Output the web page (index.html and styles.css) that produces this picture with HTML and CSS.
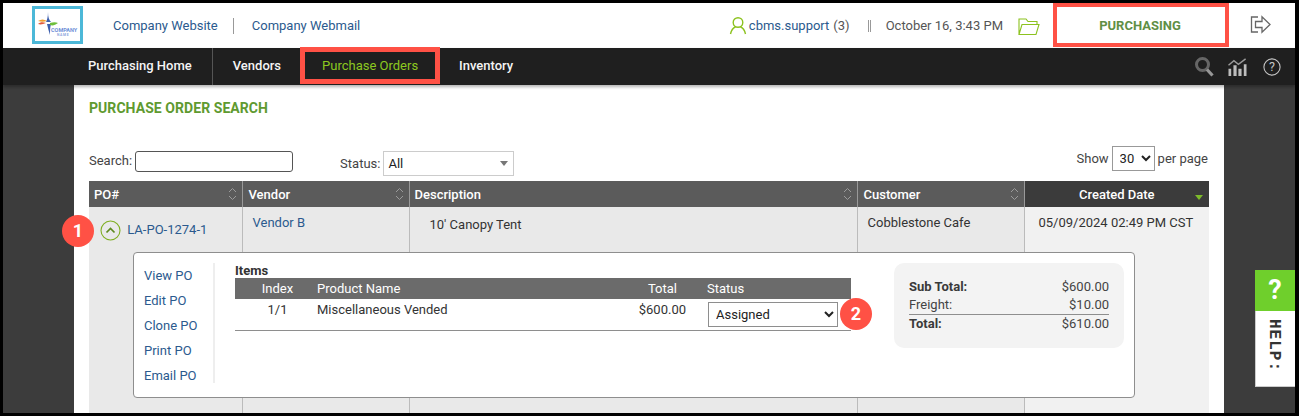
FILE: index.html
```html
<!DOCTYPE html>
<html lang="en">
<head>
<meta charset="utf-8">
<title>Purchase Order Search</title>
<link rel="stylesheet" href="styles.css">
</head>
<body>
<div class="frame">
  <header class="topbar">
    <div class="logo">
      <svg width="45" height="32" viewBox="0 0 45 32">
        <path d="M13 3 C13 8 12 11 11 13 L16 13 C14 11 13 8 13 3Z" fill="#3d5fae"/>
        <path d="M12 15 C13 19 14 23 15 26 C15 22 15 18 16 15Z" fill="#3d5fae"/>
        <path d="M3 12 C6 10 9 10 12 12 C9 13 6 13 3 12Z" fill="#f0a030"/>
        <path d="M3 15 C5 13 8 13 11 14 C8 15 6 16 3 15Z" fill="#e25a3a"/>
        <path d="M15 14 C18 13 21 13 23 14 C20 16 18 17 15 16Z" fill="#6fbf3c"/>
        <text x="16" y="23" class="logo-main">COMPANY</text>
        <text x="22" y="26.6" class="logo-sub">NAME</text>
      </svg>
    </div>
    <a class="toplink" href="#">Company Website</a>
    <span class="topdivider"></span>
    <a class="toplink" href="#">Company Webmail</a>
    <div class="topright">
      <svg class="usericon" width="18" height="19" viewBox="0 0 18 19" fill="none" stroke="#8cc21f" stroke-width="1.4">
        <circle cx="9" cy="6.5" r="4.8"/>
        <path d="M1.5 18 C2.5 13.5 5 11.5 6.5 11 M16.5 18 C15.5 13.5 13 11.5 11.5 11"/>
      </svg>
      <a class="toplink" href="#">cbms.support</a>
      <span class="count">(3)</span>
      <span class="doublebar"></span>
      <span class="when">October 16, 3:43 PM</span>
      <svg class="foldericon" width="22" height="19" viewBox="0 0 22 19" fill="none" stroke="#8cc21f" stroke-width="1.1">
        <path d="M1 17.5 V2 H8 L10 4.5 H19 V7.5 M1 17.5 L4 7.5 H21 L18 17.5 Z"/>
      </svg>
      <div class="module"><span>PURCHASING</span></div>
      <svg class="logout" width="21" height="19" viewBox="0 0 21 19" fill="none" stroke="#666" stroke-width="1.3">
        <path d="M8 2 H1.5 V17 H8"/>
        <path d="M5.5 6.5 H12 V1.8 L20 9.5 L12 17.2 V12.5 H5.5 Z"/>
      </svg>
    </div>
  </header>

  <nav class="navbar">
    <a class="navitem first" href="#">Purchasing Home</a>
    <a class="navitem" href="#">Vendors</a>
    <a class="navitem current" href="#">Purchase Orders</a>
    <a class="navitem" href="#">Inventory</a>
    <div class="navicons">
      <svg width="19" height="20" viewBox="0 0 19 20" fill="none">
        <circle cx="7.5" cy="7.5" r="6" stroke="#666" stroke-width="3"/>
        <path d="M12 12.5 L17.5 18.5" stroke="#979797" stroke-width="3.2"/>
      </svg>
      <svg class="charticon" width="21" height="18" viewBox="0 0 22 20">
        <path d="M1 8 L7 3 L12 7 L20 1" fill="none" stroke="#9a9a9a" stroke-width="1.6"/>
        <path d="M1 12 H4 V20 H1Z M6.5 8 H10 V20 H6.5Z M12 12 H15.5 V20 H12Z M18 7 H21 V20 H18Z" fill="#bdbdbd"/>
      </svg>
      <svg width="18" height="18" viewBox="0 0 20 20" fill="none" stroke="#c4c4c4" stroke-width="1.2">
        <circle cx="10" cy="10" r="9"/>
        <text x="10" y="14.5" class="helpq">?</text>
      </svg>
    </div>
  </nav>

  <main class="stage">
    <section class="panel">
      <h1 class="pagetitle">PURCHASE ORDER SEARCH</h1>
      <div class="filters">
        <label class="flabel">Search:</label>
        <input class="searchbox" type="text">
        <label class="flabel statuslabel">Status:</label>
        <div class="statusbox"><span>All</span><i class="caret"></i></div>
        <div class="perpage">
          <span>Show</span>
          <select class="pageselect"><option>30</option></select>
          <span>per page</span>
        </div>
      </div>
      <div class="tablewrap">
        <table class="results">
          <colgroup>
            <col class="c1"><col class="c2"><col class="c3"><col class="c4"><col class="c5">
          </colgroup>
          <thead>
            <tr>
              <th>PO#<svg class="sorter" width="9" height="14" viewBox="0 0 9 14"><path d="M1 5 L4.5 1.5 L8 5 M1 9 L4.5 12.5 L8 9" fill="none" stroke="#9b9b9b"/></svg></th>
              <th class="wide">Vendor<svg class="sorter" width="9" height="14" viewBox="0 0 9 14"><path d="M1 5 L4.5 1.5 L8 5 M1 9 L4.5 12.5 L8 9" fill="none" stroke="#9b9b9b"/></svg></th>
              <th>Description<svg class="sorter" width="9" height="14" viewBox="0 0 9 14"><path d="M1 5 L4.5 1.5 L8 5 M1 9 L4.5 12.5 L8 9" fill="none" stroke="#9b9b9b"/></svg></th>
              <th class="wide">Customer<svg class="sorter" width="9" height="14" viewBox="0 0 9 14"><path d="M1 5 L4.5 1.5 L8 5 M1 9 L4.5 12.5 L8 9" fill="none" stroke="#9b9b9b"/></svg></th>
              <th class="sorted">Created Date<i class="sortmark"></i></th>
            </tr>
          </thead>
          <tbody>
            <tr>
              <td class="pocell">
                <span class="toggle"><svg width="21" height="21" viewBox="0 0 21 21" fill="none"><circle cx="10.5" cy="10.5" r="9.5" stroke="#7fae22" stroke-width="1.1"/><path d="M6.5 12.5 L10.5 8.5 L14.5 12.5" stroke="#5d8a1e" stroke-width="1.7"/></svg></span>
                <a href="#">LA-PO-1274-1</a>
              </td>
              <td class="vendorcell"><a href="#">Vendor B</a></td>
              <td class="desccell">10' Canopy Tent</td>
              <td class="custcell">Cobblestone Cafe</td>
              <td class="datecell">05/09/2024 02:49 PM CST</td>
            </tr>
          </tbody>
        </table>
        <div class="detail">
          <ul class="actions">
            <li><a href="#">View PO</a></li>
            <li><a href="#">Edit PO</a></li>
            <li><a href="#">Clone PO</a></li>
            <li><a href="#">Print PO</a></li>
            <li><a href="#">Email PO</a></li>
          </ul>
          <div class="items">
            <div class="itemstitle">Items</div>
            <div class="itemhead itemgrid">
              <span class="ci">Index</span><span>Product Name</span><span class="ct">Total</span><span class="cs">Status</span>
            </div>
            <div class="itemrow itemgrid">
              <span class="ci num">1/1</span><span>Miscellaneous Vended</span><span class="ct amount">$600.00</span>
              <span class="cs"><select class="statusselect"><option>Assigned</option></select></span>
            </div>
          </div>
          <div class="totals">
            <div class="tline strong"><span>Sub Total:</span><span>$600.00</span></div>
            <div class="tline ruled"><span>Freight:</span><span>$10.00</span></div>
            <div class="tline strong"><span>Total:</span><span>$610.00</span></div>
          </div>
        </div>
        <span class="marker m1">1</span>
        <span class="marker m2">2</span>
      </div>
    </section>
    <aside class="helptab">
      <div class="helpq-box">?</div>
      <div class="helpword">HELP:</div>
    </aside>
  </main>
</div>
</body>
</html>
```
FILE: styles.css
```css
* { box-sizing: border-box; }
html, body { margin: 0; padding: 0; height: 416px; overflow: hidden; background: #000; }
body { font-family: Roboto, "Liberation Sans", sans-serif; font-size: 13px; color: #333; }
a { color: #2b5a8e; text-decoration: none; }

.frame { height: 416px; padding: 3px 4px 3px 3px; display: flex; flex-direction: column; }

.topbar { height: 45px; background: #fff; display: flex; align-items: center; flex: none; }
.logo { width: 51px; height: 38px; margin-left: 29px; margin-right: 30px; border: 3px solid #4cb8d8; background: #fff; margin-top: -1px; flex: none; }
.logo svg { display: block; }
.logo-main { font: bold 5.5px Roboto, sans-serif; fill: #6f8fd8; }
.logo-sub { font: bold 3.4px Roboto, sans-serif; fill: #8aa4dc; letter-spacing: .7px; }
.toplink { font-size: 13px; line-height: 16px; white-space: nowrap; }
.topdivider { width: 1px; height: 16px; background: #999; margin: 0 18px 0 15px; }
.topright { margin-left: auto; display: flex; align-items: center; height: 45px; }
.usericon { margin-right: 2px; }
.count { margin-left: 4px; color: #555; }
.doublebar { width: 3px; height: 12px; border-left: 1px solid #999; border-right: 1px solid #999; margin: 0 15px 0 18px; }
.when { color: #555; white-space: nowrap; }
.foldericon { margin-left: 15px; margin-top: 2px; }
.module { width: 176px; height: 44px; margin-left: 13px; border: 4px solid #ff5145; padding-right: 2px; display: flex; align-items: center; justify-content: center; font-weight: 700; font-size: 13px; color: #5f8f45; align-self: flex-start; }
.logout { margin-left: 21px; margin-right: 24px; margin-top: -2px; }

.navbar { height: 37px; background: #1f1f1f; display: flex; align-items: center; flex: none; padding-left: 85px; box-shadow: 0 2px 3px rgba(0,0,0,.3); position: relative; z-index: 2; }
.navitem { color: #f4f4f4; font-size: 13px; font-weight: 500; white-space: nowrap; height: 37px; line-height: 36px; }
.navitem.first { padding-right: 20px; border-right: 1px solid #555; margin-right: 20px; }
.navitem.current { color: #8cc820; border: 5px solid #ff5145; width: 140px; height: 37px; line-height: 27px; text-align: center; margin: -1px 19px 0 19px; font-weight: 400; align-self: flex-start; }
.navicons { margin-left: auto; display: flex; align-items: center; gap: 13px; padding-right: 14px; }
.charticon { margin-right: 2px; }
.helpq { font: 14px Roboto, sans-serif; fill: #c4c4c4; stroke: none; text-anchor: middle; }

.stage { flex: 1; min-height: 0; background: #3c3c3c; padding-left: 71px; position: relative; overflow: hidden; display: flex; }
.panel { width: 1150px; background: #fff; padding: 0 15px; flex: none; }
.pagetitle { margin: 15px 0 0; font-size: 14px; line-height: 16px; font-weight: 700; color: #5f9a30; letter-spacing: .06px; }

.filters { display: flex; align-items: flex-start; margin-top: 32px; height: 32px; position: relative; }
.flabel { color: #444; line-height: 16px; margin-top: 5px; }
.searchbox { width: 158px; height: 21px; margin: 3px 0 0 3px; border: 1px solid #555; border-radius: 3px; background: #fff; padding: 0; }
.statuslabel { margin-left: 47px; margin-top: 8px; }
.statusbox { width: 131px; height: 25px; margin: 3px 0 0 3px; border: 1px solid #ccc; padding-left: 4px; display: flex; align-items: center; justify-content: space-between; color: #222; font-size: 13px; }
.caret { width: 0; height: 0; border-left: 4.5px solid transparent; border-right: 4.5px solid transparent; border-top: 5px solid #777; margin-right: 5px; }
.perpage { margin-left: auto; display: flex; align-items: center; gap: 3px; color: #444; height: 24px; margin-top: -2px; padding-right: 1px; }
.pageselect { width: 43px; height: 25px; border: 1px solid #999; background: #fff; font: 13px Roboto, sans-serif; color: #222; padding-left: 3px; border-radius: 0; }

.tablewrap { position: relative; width: 1120px; margin-top: 1px; }
.results { width: 1120px; table-layout: fixed; border-collapse: collapse; }
.c1 { width: 153px; } .c2 { width: 167px; } .c3 { width: 448px; } .c4 { width: 167px; } .c5 { width: 185px; }
.results th { height: 26px; padding: 0 0 0 5px; background: #5b5b5b; color: #fff; font-size: 13px; font-weight: 500; text-align: left; border-right: 1px solid #999; position: relative; }
.results th.wide { padding-left: 6px; }
.results th:last-child { border-right: 0; }
.results th.sorted { background: #3b3b3b; text-align: center; padding: 0; }
.sorter { position: absolute; right: 5px; top: 6px; }
.sortmark { position: absolute; right: 6px; top: 14px; border-left: 4px solid transparent; border-right: 4px solid transparent; border-top: 5px solid #7dbb2a; }
.results td { height: 210px; vertical-align: top; background: #e9e9e9; border-right: 1px solid #bbb; color: #333; line-height: 16px; }
.results td:last-child { background: #f1f1f1; border-right: 0; }
.pocell { padding: 13px 0 0 11px; }
.toggle { display: inline-block; vertical-align: middle; margin-right: 3px; height: 21px; }
.toggle svg { display: block; }
.vendorcell { padding: 8px 0 0 10px; }
.desccell { padding: 10px 0 0 20px; }
.custcell { padding: 8px 0 0 10px; }
.datecell { padding: 8px 0 0 14px; white-space: nowrap; }

.detail { position: absolute; left: 44px; top: 71px; width: 1002px; height: 146px; background: #fff; border: 1px solid #8e8e8e; border-radius: 4px; display: flex; }
.actions { list-style: none; margin: 10px 0 0; padding: 0 0 0 10px; width: 81px; height: 120px; border-right: 2px solid #eee; flex: none; }
.actions li { height: 25px; line-height: 25px; font-size: 13px; white-space: nowrap; }
.items { width: 616px; margin-left: 20px; padding-top: 11px; flex: none; }
.itemstitle { font-size: 13px; font-weight: 700; line-height: 14px; height: 14px; color: #333; }
.itemgrid { display: grid; grid-template-columns: 82px 297px 63px 174px; }
.itemhead { background: #6b6b6b; color: #fff; height: 21px; line-height: 21px; font-size: 13px; font-weight: 400; }
.itemrow { height: 32px; border-bottom: 1px solid #8e8e8e; line-height: 21px; color: #333; font-size: 13px; }
.ci { text-align: center; padding-left: 3px; }
.ci.num { padding-left: 3px; }
.ct { text-align: right; white-space: nowrap; }
.ct.amount { margin-right: -9px; }
.cs { padding-left: 30px; }
.statusselect { width: 130px; height: 25px; margin: 3px 0 0 1px; border: 1px solid #8e8e8e; background: #fff; font: 13px Roboto, sans-serif; color: #222; border-radius: 0; padding-left: 3px; display: block; }
.totals { width: 230px; height: 85px; margin: 10px 0 0 43px; background: #f3f3f3; border-radius: 10px; padding: 15px 15px 0; flex: none; font-size: 13px; color: #444; }
.tline { display: flex; justify-content: space-between; height: 17px; line-height: 17px; margin-bottom: 1px; }
.tline.strong { font-weight: 700; color: #3a3a3a; }
.tline.strong span:last-child { font-weight: 400; color: #444; }
.tline.ruled { border-bottom: 1px solid #8e8e8e; height: 19px; margin-bottom: 0; }

.marker { position: absolute; width: 32px; height: 32px; border-radius: 50%; background: #ff5145; color: #fff; font-weight: 700; font-size: 18px; line-height: 32px; text-align: center; }
.m1 { left: -27px; top: 34px; }
.m2 { left: 751px; top: 117px; }

.helptab { position: absolute; right: 0; top: 185px; width: 40px; height: 117px; border: 1px solid #ccc; border-right: 0; background: #fff; }
.helpq-box { height: 41px; margin: -1px 0 0 -1px; background: #6fcf2c; color: #fff; font-weight: 700; font-size: 27px; line-height: 41px; text-align: center; }
.helpword { writing-mode: vertical-rl; font-family: "Liberation Mono", monospace; font-weight: 700; font-size: 16px; letter-spacing: 1px; color: #333; margin: 8px 0 0 8px; line-height: 20px; }
```
